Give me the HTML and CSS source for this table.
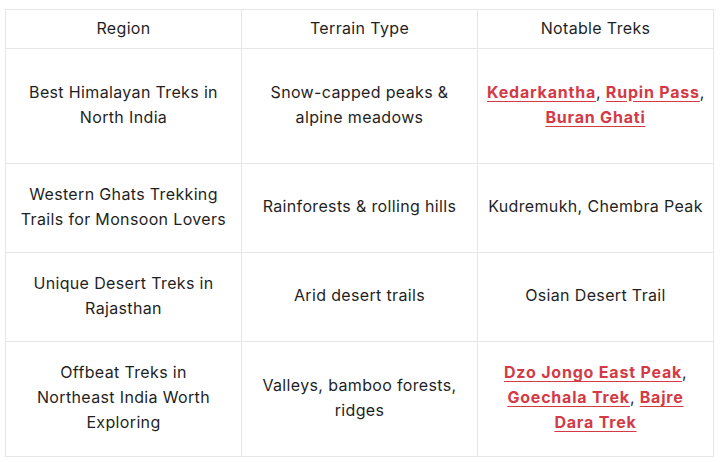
FILE: index.html
```html
<!DOCTYPE html>
<html>
<head>
<meta charset="utf-8">
<link rel="stylesheet" href="styles.css">
</head>
<body>
<table class="treks">
  <thead>
    <tr class="head-row">
      <th class="col-region">Region</th>
      <th class="col-terrain">Terrain Type</th>
      <th class="col-treks">Notable Treks</th>
    </tr>
  </thead>
  <tbody>
    <tr class="row-tall">
      <td class="col-region">Best Himalayan Treks in North India</td>
      <td class="col-terrain">Snow-capped peaks &amp; alpine meadows</td>
      <td class="col-treks"><span class="keep-line"><a href="#">Kedarkantha</a>, <a href="#">Rupin Pass</a>,</span> <a href="#">Buran Ghati</a></td>
    </tr>
    <tr class="row-mid">
      <td class="col-region">Western Ghats Trekking Trails for Monsoon Lovers</td>
      <td class="col-terrain">Rainforests &amp; rolling hills</td>
      <td class="col-treks">Kudremukh, Chembra Peak</td>
    </tr>
    <tr class="row-mid">
      <td class="col-region">Unique Desert Treks in Rajasthan</td>
      <td class="col-terrain">Arid desert trails</td>
      <td class="col-treks">Osian Desert Trail</td>
    </tr>
    <tr class="row-tall">
      <td class="col-region">Offbeat Treks in Northeast India Worth Exploring</td>
      <td class="col-terrain">Valleys, bamboo forests, ridges</td>
      <td class="col-treks"><a href="#">Dzo Jongo East Peak</a>, <a href="#">Goechala Trek</a>, <a href="#">Bajre Dara Trek</a></td>
    </tr>
  </tbody>
</table>
</body>
</html>
```
FILE: styles.css
```css
html, body {
  margin: 0;
  padding: 0;
  background: #ffffff;
}
body {
  padding: 9px 0 0 5px;
  font-family: Inter, "Noto Sans", sans-serif;
  color: #1f1f1f;
}
.treks {
  border-collapse: collapse;
  table-layout: fixed;
  width: 709px;
  font-size: 16px;
  line-height: 25px;
  letter-spacing: 0.35px;
}
.treks th,
.treks td {
  border: 1px solid #e6e6e6;
  text-align: center;
  vertical-align: middle;
  padding: 0 12px 3px;
  font-weight: 400;
}
.treks th { padding-bottom: 1px; }
.treks .col-region { padding-left: 14px; padding-right: 14px; }
.treks .col-treks { padding-left: 9px; padding-right: 9px; }
.head-row { height: 39px; }
.row-tall { height: 115px; }
.row-mid { height: 89px; }
.keep-line { white-space: nowrap; }
.treks a {
  color: #d43a45;
  font-weight: 700;
  letter-spacing: 0.8px;
  text-decoration: underline;
  text-underline-offset: 3px;
}
```
